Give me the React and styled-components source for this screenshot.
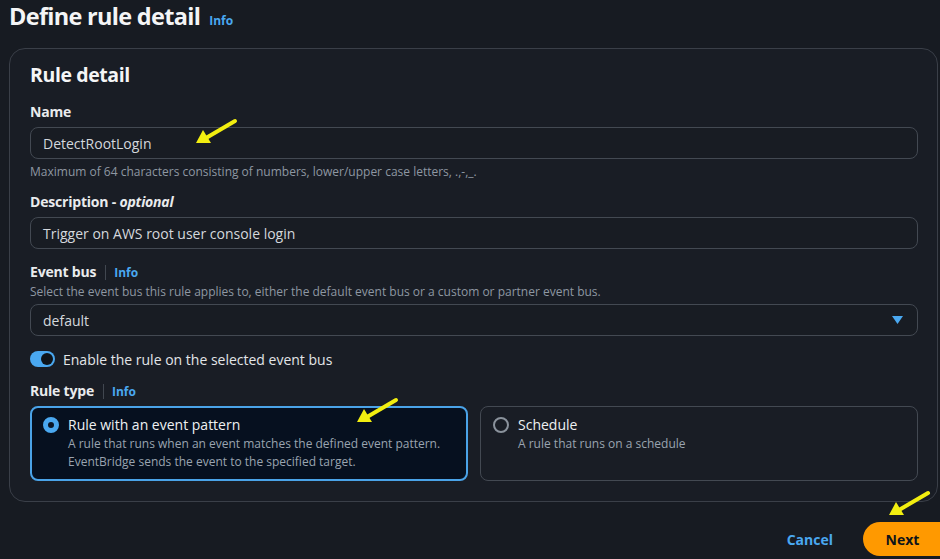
import React from 'react';
import styled, { createGlobalStyle } from 'styled-components';

const GlobalStyle = createGlobalStyle`
  html, body {
    margin: 0;
    background: #171b22;
  }
  body {
    font-family: "Open Sans", "Noto Sans", sans-serif;
    color: #e9ebed;
  }
`;

const Page = styled.div`
  position: relative;
  width: 940px;
  height: 559px;
  box-sizing: border-box;
  padding: 0 2px 0 9px;
  overflow: hidden;
`;

const Header = styled.div`
  display: flex;
  align-items: baseline;
  gap: 9px;
  height: 33px;
`;

const Title = styled.h1`
  margin: 0;
  font-size: 23.5px;
  line-height: 33px;
  font-weight: 700;
  letter-spacing: -0.7px;
  color: #f4f5f6;
`;

const InfoLink = styled.a`
  font-size: 12px;
  font-weight: 700;
  color: #4aa8f0;
  text-decoration: none;
`;

const Panel = styled.section`
  margin-top: 15px;
  border: 1px solid #3a3f48;
  border-radius: 16px;
  background: #191d25;
  padding: 12px 19px 20px 20px;
`;

const PanelTitle = styled.h2`
  margin: 0;
  font-size: 19.5px;
  line-height: 28px;
  font-weight: 700;
  letter-spacing: -0.4px;
  color: #f4f5f6;
`;

const Field = styled.div`
  margin-top: ${({ gap }) => gap}px;
`;

const LabelRow = styled.div`
  display: flex;
  align-items: center;
  height: 20px;
`;

const Label = styled.label`
  font-size: 14px;
  line-height: 20px;
  font-weight: 700;
  color: #e9ebed;
  letter-spacing: -0.2px;

  em {
    font-style: italic;
    font-weight: 700;
  }
`;

const Divider = styled.span`
  width: 1px;
  height: 15px;
  background: #414750;
  margin: 0 8px 0 9px;
`;

const Helper = styled.div`
  margin-top: ${({ top }) => top}px;
  font-size: 12px;
  line-height: 16px;
  color: #8e97a2;
`;

const Input = styled.div`
  margin-top: ${({ top = 5 }) => top}px;
  height: 32px;
  box-sizing: border-box;
  border: 1px solid #434952;
  border-radius: 8px;
  background: #181c23;
  padding: 0 12px;
  display: flex;
  align-items: center;
  justify-content: space-between;
  font-size: 14px;
  color: #d4d8dd;
`;

const Caret = styled.svg`
  width: 11px;
  height: 8px;
  margin-right: 2px;
`;

const ToggleRow = styled.div`
  margin-top: 14px;
  display: flex;
  align-items: center;
  gap: 8px;
  height: 18px;
  font-size: 14px;
  color: #e2e5e8;
`;

const Toggle = styled.span`
  position: relative;
  width: 25px;
  height: 16px;
  border-radius: 8px;
  background: #4aa8f0;

  &::after {
    content: '';
    position: absolute;
    top: 2px;
    right: 2px;
    width: 12px;
    height: 12px;
    border-radius: 50%;
    background: #0f141a;
  }
`;

const Tiles = styled.div`
  margin-top: 5px;
  display: grid;
  grid-template-columns: 1fr 1fr;
  gap: 12px;
  height: 75px;
`;

const Tile = styled.div`
  display: flex;
  gap: 9px;
  box-sizing: border-box;
  border-radius: 8px;
  border: ${({ selected }) => (selected ? '2px solid #4aa3e8' : '1px solid #434952')};
  background: ${({ selected }) => (selected ? '#06101f' : 'transparent')};
  padding: ${({ selected }) => (selected ? '7px 11px' : '8px 12px')};
`;

const Radio = styled.span`
  flex: none;
  margin-top: 2px;
  width: 16px;
  height: 16px;
  box-sizing: border-box;
  border-radius: 50%;
  border: ${({ checked }) => (checked ? '5px solid #4aa8f0' : '2px solid #8a929c')};
  background: ${({ checked }) => (checked ? '#0b1626' : 'transparent')};
`;

const TileTitle = styled.div`
  font-size: 14px;
  line-height: 20px;
  color: #eef0f2;
`;

const TileText = styled.div`
  font-size: 12px;
  line-height: 18px;
  color: #9aa4b0;
`;

const Footer = styled.div`
  margin: 20px -2px 0 0;
  display: flex;
  justify-content: flex-end;
  align-items: center;
  gap: 30px;
`;

const LinkButton = styled.button`
  border: 0;
  background: none;
  padding: 0;
  font-family: inherit;
  font-size: 14px;
  font-weight: 700;
  color: #4aa8f0;
`;

const PrimaryButton = styled.button`
  width: 77px;
  height: 34px;
  border: 0;
  border-radius: 17px 0 0 17px;
  background: #ff9900;
  font-family: inherit;
  font-size: 14px;
  font-weight: 700;
  color: #0f141a;
  padding: 0 0 0 2px;
`;

const ArrowSvg = styled.svg`
  position: absolute;
  width: 44px;
  height: 30px;
  pointer-events: none;
`;

const Arrow = ({ left, top }) => (
  <ArrowSvg viewBox="0 0 44 30" style={{ left, top }}>
    <line x1="41" y1="3" x2="12" y2="20" stroke="#f2ee10" strokeWidth="4" strokeLinecap="round" />
    <polygon points="2,25 9,12 17,25" fill="#f2ee10" />
  </ArrowSvg>
);

const App = () => {
  return (
    <>
      <GlobalStyle />
      <Page>
        <Header>
          <Title>Define rule detail</Title>
          <InfoLink href="#">Info</InfoLink>
        </Header>

        <Panel>
          <PanelTitle>Rule detail</PanelTitle>

          <Field gap={13}>
            <LabelRow>
              <Label>Name</Label>
            </LabelRow>
            <Input>DetectRootLogin</Input>
            <Helper top={5}>
              Maximum of 64 characters consisting of numbers, lower/upper case letters, .,-,_.
            </Helper>
          </Field>

          <Field gap={12}>
            <LabelRow>
              <Label>
                Description - <em>optional</em>
              </Label>
            </LabelRow>
            <Input>Trigger on AWS root user console login</Input>
          </Field>

          <Field gap={13}>
            <LabelRow>
              <Label>Event bus</Label>
              <Divider />
              <InfoLink href="#">Info</InfoLink>
            </LabelRow>
            <Helper top={2}>
              Select the event bus this rule applies to, either the default event bus or a custom or partner event bus.
            </Helper>
            <Input top={4}>
              default
              <Caret viewBox="0 0 11 8">
                <polygon points="0,0 11,0 5.5,8" fill="#4aa8f0" />
              </Caret>
            </Input>
          </Field>

          <ToggleRow>
            <Toggle />
            Enable the rule on the selected event bus
          </ToggleRow>

          <Field gap={13}>
            <LabelRow>
              <Label>Rule type</Label>
              <Divider />
              <InfoLink href="#">Info</InfoLink>
            </LabelRow>
            <Tiles>
              <Tile selected>
                <Radio checked />
                <div>
                  <TileTitle>Rule with an event pattern</TileTitle>
                  <TileText>A rule that runs when an event matches the defined event pattern.</TileText>
                  <TileText>EventBridge sends the event to the specified target.</TileText>
                </div>
              </Tile>
              <Tile>
                <Radio />
                <div>
                  <TileTitle>Schedule</TileTitle>
                  <TileText>A rule that runs on a schedule</TileText>
                </div>
              </Tile>
            </Tiles>
          </Field>
        </Panel>

        <Footer>
          <LinkButton>Cancel</LinkButton>
          <PrimaryButton>Next</PrimaryButton>
        </Footer>

        <Arrow left={194} top={118} />
        <Arrow left={355} top={397} />
        <Arrow left={887} top={490} />
      </Page>
    </>
  );
};

export default App;
